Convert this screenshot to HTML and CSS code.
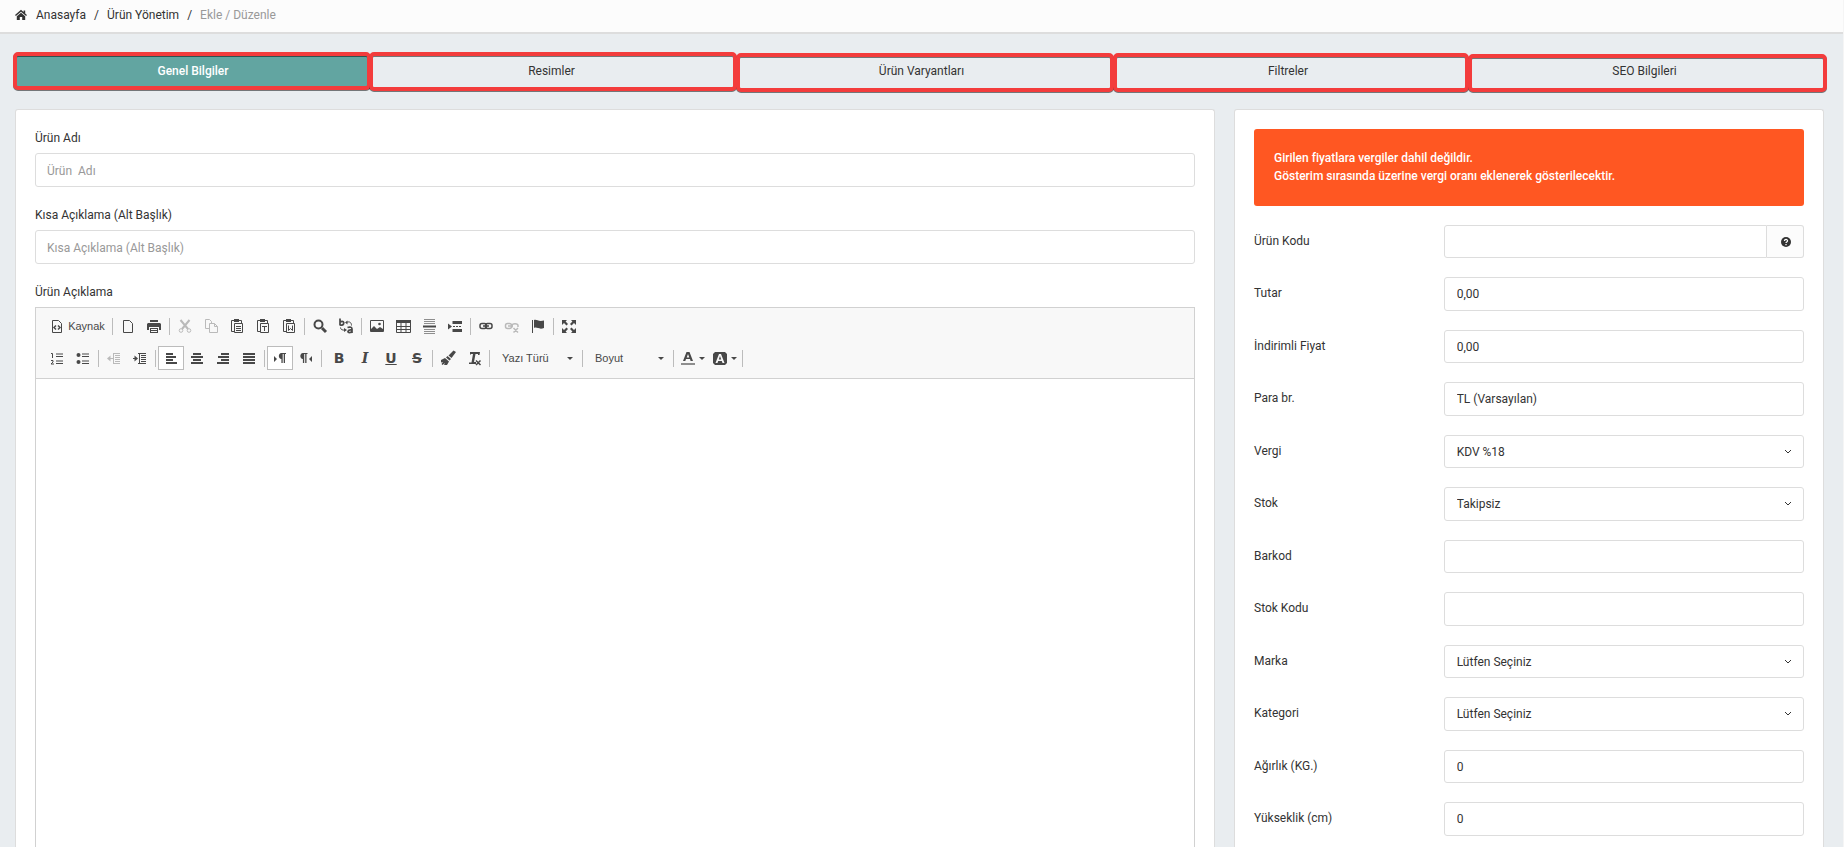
FILE: index.html
```html
<!DOCTYPE html>
<html lang="tr">
<head>
<meta charset="utf-8">
<title>Ürün Yönetim - Ekle / Düzenle</title>
<link rel="stylesheet" href="styles.css">
</head>
<body>
<div class="app">
  <header class="topbar">
    <nav class="breadcrumb" aria-label="Konum">
      <svg class="home" viewBox="0 0 12 12"><path d="M6 .8 0 6l.9 1L6 2.7 11.100 7l.9-1-1.800-1.600V1.500H8.600v1.400z"/><path d="M6 3.700 1.800 7.200V11h3V8h2.400v3h3V7.200z"/></svg>
      <a href="#">Anasayfa</a><span class="slash">/</span><a href="#">Ürün Yönetim</a><span class="slash">/</span><span class="current">Ekle / Düzenle</span>
    </nav>
  </header>

  <main class="content">
    <nav class="tabs" aria-label="Ürün sekmeleri">
      <button class="tab tab-active" type="button">Genel Bilgiler<span class="frame frame-general"></span></button>
      <button class="tab" type="button">Resimler<span class="frame frame-images"></span></button>
      <button class="tab" type="button">Ürün Varyantları<span class="frame frame-variants"></span></button>
      <button class="tab" type="button">Filtreler<span class="frame frame-filters"></span></button>
      <button class="tab" type="button">SEO Bilgileri<span class="frame frame-seo"></span></button>
    </nav>

    <div class="columns">
      <section class="card main-card">
        <div class="group">
          <label for="name">Ürün Adı</label>
          <input class="field" id="name" type="text" placeholder="Ürün&nbsp; Adı">
        </div>
        <div class="group">
          <label for="short">Kısa Açıklama (Alt Başlık)</label>
          <input class="field" id="short" type="text" placeholder="Kısa Açıklama (Alt Başlık)">
        </div>
        <label for="description">Ürün Açıklama</label>
        <div class="editor">
          <div class="toolbar">
            <div class="toolrow">
              <button class="tool wide" type="button"><svg viewBox="0 0 16 16"><path class="l" d="M3.500 2.500h6l3 3v9h-9z"/><path class="l" d="M7 7.500 5 9.500l2 2M9 7.500l2 2-2 2" stroke-width="1.500"/></svg>Kaynak</button>
              <i class="sep"></i>
              <button class="tool" type="button" aria-label="Yeni Sayfa"><svg viewBox="0 0 16 16"><path class="l" d="M3.500 2.500h6l3 3v9h-9z"/></svg></button>
              <button class="tool" type="button" aria-label="Yazdır"><svg viewBox="0 0 16 16"><path d="M4 2h8v2H4zM2 5h12l1 1v6h-2V9H3v3H1V6z"/><path fill-rule="evenodd" d="M4 10h8v5H4zm1 1v1h6v-1zm0 2v1h6v-1z"/></svg></button>
              <i class="sep"></i>
              <button class="tool off" type="button" aria-label="Kes" disabled><svg viewBox="0 0 16 16"><path class="l" stroke-width="2" d="M3.500 2 11 11M12.500 2 5 11"/><circle class="l" cx="4" cy="12.500" r="1.800"/><circle class="l" cx="12" cy="12.500" r="1.800"/></svg></button>
              <button class="tool off" type="button" aria-label="Kopyala" disabled><svg viewBox="0 0 16 16"><path class="l" d="M6 10.500H2.500v-9h4l2 2v2M6.500 5.500h5l3 3v6h-8zM11.500 5.500v3h3"/></svg></button>
              <button class="tool" type="button" aria-label="Yapıştır"><svg viewBox="0 0 16 16"><path class="l" d="M5 13.500H2.500v-11h10V5M5.500 5.500h8v9h-8z"/><path d="M5 1h5v3H5z"/><path class="l" d="M7 8.500h5M7 10.500h5M7 12.500h5"/></svg></button>
              <button class="tool" type="button" aria-label="Düz metin yapıştır"><svg viewBox="0 0 16 16"><path class="l" d="M5 13.500H2.500v-11h10V5M5.500 5.500h8v9h-8z"/><path d="M5 1h5v3H5z"/><path class="l" d="M7 8.500h5M9.500 8.500V13"/></svg></button>
              <button class="tool" type="button" aria-label="Word'den yapıştır"><svg viewBox="0 0 16 16"><path class="l" d="M5 13.500H2.500v-11h10V5M5.500 5.500h8v9h-8z"/><path d="M5 1h5v3H5z"/><path class="l" d="M7.500 7.500v5l2-2 2 2v-5"/></svg></button>
              <i class="sep"></i>
              <button class="tool" type="button" aria-label="Bul"><svg viewBox="0 0 16 16"><circle class="l" cx="6.500" cy="6.500" r="4" stroke-width="2"/><path class="l" stroke-width="3" d="m10 10 4 4"/></svg></button>
              <button class="tool" type="button" aria-label="Değiştir"><svg viewBox="0 0 16 16"><path class="l" stroke-width="1.700" d="M2 .5v7M2 4c3-1.500 4.500 0 3.500 2S3 7 2 7M9.500 9.500c3-1 4.500 0 4.500 1.500V15M14 12c-5-.5-5 3-2 2.500 1 0 2-1 2-2"/><path class="l" d="M8.500 4.500c3-1.500 5 0 5 3M2.500 9.500c0 2 2 3 4.500 2.500"/><path d="M9.500 2.500v4L7 4.500zM6 10v4L9 12z"/></svg></button>
              <i class="sep"></i>
              <button class="tool" type="button" aria-label="Resim"><svg viewBox="0 0 16 16"><path class="l" d="M1.500 2.500h13v11h-13z"/><path d="M2 13v-2l3-3 3 3 3-2 3 2v2z"/><circle cx="10.500" cy="6" r="1.300"/></svg></button>
              <button class="tool" type="button" aria-label="Tablo"><svg viewBox="0 0 16 16"><path d="M1 2h15v3H1z"/><path class="l" d="M1.500 2.500h14v12h-14zM1 8.500h15M1 11.500h15M6 5v9M11 5v9"/></svg></button>
              <button class="tool" type="button" aria-label="Yatay çizgi"><svg viewBox="0 0 16 16"><path class="l" opacity=".6" d="M3 1.500h11M3 3.500h11M3 5.500h11M3 11.500h11M3 13.500h11M3 15.500h11"/><path d="M2 7.500h13v2H2z"/></svg></button>
              <button class="tool" type="button" aria-label="Sayfa sonu"><svg viewBox="0 0 16 16"><path d="M1 5.500v6l4-3zM5.500 3H15v3H5.500zM5.500 11H15v3H5.500z"/><path class="l" stroke-dasharray="2 1" d="M6 8.500h9"/></svg></button>
              <i class="sep"></i>
              <button class="tool" type="button" aria-label="Bağlantı"><svg viewBox="0 0 16 16"><rect class="l" x="2" y="5.500" width="6.500" height="5" rx="2" stroke-width="1.500"/><rect class="l" x="7.500" y="5.500" width="6.500" height="5" rx="2" stroke-width="1.500"/><path class="l" stroke-width="1.500" d="M5 8h6"/></svg></button>
              <button class="tool off" type="button" aria-label="Bağlantıyı kaldır" disabled><svg viewBox="0 0 16 16"><rect class="l" x="1.500" y="5.500" width="6" height="5" rx="2" stroke-width="1.500"/><path class="l" stroke-width="1.500" d="M4 8h5M8 9.500V7.500c0-2.500 6-2.500 6 0V9M9.500 10l4.500 4.500m0-4.500-4.500 4.500"/></svg></button>
              <button class="tool" type="button" aria-label="Çapa"><svg viewBox="0 0 16 16"><path d="M2 2h1v13H2zM4 2c3-1 4 2 10 .5V10c-5 2-7-1.500-10 0z"/></svg></button>
              <i class="sep"></i>
              <button class="tool" type="button" aria-label="Tam ekran"><svg viewBox="0 0 16 16"><path d="M1 2h5L4.600 3.600 7 6 5.500 7.500 3 5 1 7zM15 2v5l-2-2-2.500 2.500L9 6l2.400-2.400L10 2zM1 15v-5l2 2 2.500-2.500L7 11l-2.400 2.400L6 15zM15 15h-5l1.400-1.600L9 11l1.500-1.500L13 12l2-2z"/></svg></button>
            </div>
            <div class="toolrow">
              <button class="tool" type="button" aria-label="Numaralı liste"><svg viewBox="0 0 16 16"><path class="l" d="M2 3.500h1.500V8M2 10.500h2V12L2 14h3"/><path class="l" d="M7 4h7M7 6.500h7M7 11h7M7 13.500h7"/></svg></button>
              <button class="tool" type="button" aria-label="Maddeli liste"><svg viewBox="0 0 16 16"><circle cx="3.500" cy="5" r="2"/><circle cx="3.500" cy="12" r="2"/><path class="l" d="M7 4h7M7 6.500h7M7 11h7M7 13.500h7"/></svg></button>
              <i class="sep"></i>
              <button class="tool off" type="button" aria-label="Girintiyi azalt" disabled><svg viewBox="0 0 16 16"><path d="M1 8.500 4.500 5.500v6z"/><path class="l" d="M4 8.500h4M7 3.500h7M9 5.500h5M9 7.500h5M9 9.500h5M9 11.500h5M7 13.500h7M7.500 3v11"/></svg></button>
              <button class="tool" type="button" aria-label="Girintiyi artır"><svg viewBox="0 0 16 16"><path d="M6 8.500 2.500 5.500v6z"/><path class="l" d="M1 8.500h4M6 3.500h8M9 5.500h5M9 7.500h5M9 9.500h5M9 11.500h5M6 13.500h8M7.500 3v11"/></svg></button>
              <i class="sep"></i>
              <button class="tool on" type="button" aria-label="Sola hizala"><svg viewBox="0 0 16 16"><path d="M3 3h7v2H3zM3 6h10v2H3zM3 9h7v2H3zM3 12h11v2H3z"/></svg></button>
              <button class="tool" type="button" aria-label="Ortala"><svg viewBox="0 0 16 16"><path d="M4 3h8v2H4zM2 6h12v2H2zM4 9h8v2H4zM2 12h12v2H2z"/></svg></button>
              <button class="tool" type="button" aria-label="Sağa hizala"><svg viewBox="0 0 16 16"><path d="M6 3h8v2H6zM3 6h11v2H3zM6 9h8v2H6zM2 12h12v2H2z"/></svg></button>
              <button class="tool" type="button" aria-label="İki yana yasla"><svg viewBox="0 0 16 16"><path d="M2 3h12v2H2zM2 6h12v2H2zM2 9h12v2H2zM2 12h12v2H2z"/></svg></button>
              <i class="sep"></i>
              <button class="tool on" type="button" aria-label="Soldan sağa"><svg viewBox="0 0 16 16"><path d="M2 6v6l3-3zM14 3v1h-1v9h-1.300V4h-1v9H9.400V9C6 9 6 3 9.400 3z"/></svg></button>
              <button class="tool" type="button" aria-label="Sağdan sola"><svg viewBox="0 0 16 16"><path d="M14 6v6l-3-3zM9.500 3v1h-1v9H7.200V4h-1v9H4.900V9C1.500 9 1.500 3 4.900 3z"/></svg></button>
              <i class="sep"></i>
              <div class="styles">
                <button class="tool glyph" type="button" aria-label="Kalın"><b>B</b></button>
                <button class="tool glyph serif" type="button" aria-label="İtalik"><b><em>I</em></b></button>
                <button class="tool glyph" type="button" aria-label="Altı çizili"><b><u>U</u></b></button>
                <button class="tool glyph" type="button" aria-label="Üstü çizili"><b><s>S</s></b></button>
              </div>
              <i class="sep"></i>
              <button class="tool" type="button" aria-label="Biçim kopyala"><svg viewBox="0 0 16 16"><path d="M13.500.5 16 2l-4.500 6L8.500 5.500zM7.500 6l3.500 3-1.500 1.500L6 7.500zM5 8l4 3.500L7 15H4l1-2-2.500 2-1-1L3 12l-2 .5V10z"/></svg></button>
              <button class="tool" type="button" aria-label="Biçimi temizle"><svg viewBox="0 0 16 16"><path d="M4 2h10l-.5 3H12V4H9.500L8 12h2v2H3v-1.500h2.500L7 4H5l-1 1z"/><path class="l" stroke-width="1.500" d="m10 10.500 4.500 4.500m0-4.500L10 15"/></svg></button>
              <i class="sep"></i>
              <button class="tool combo font" type="button">Yazı Türü<span class="arrow"></span></button>
              <i class="sep"></i>
              <button class="tool combo size" type="button">Boyut<span class="arrow"></span></button>
              <i class="sep"></i>
              <button class="tool color" type="button" aria-label="Yazı rengi"><svg viewBox="0 0 16 16"><path fill-rule="evenodd" d="M6.500 2h3L13 11h-2.400L10 9H6l-.7 2H3zM8 4 6.700 7.400h2.600z"/><path opacity=".6" d="M1 13h14v2H1z"/></svg><span class="arrow"></span></button>
              <button class="tool color" type="button" aria-label="Arka plan rengi"><svg viewBox="0 0 16 16"><path fill-rule="evenodd" d="M3 2h10l2 2v9l-2 2H3l-2-2V4zM7 4 3.500 13h2L6.200 11h3.600l.7 2h2L9 4zM8 6l1.200 3.500H6.800z"/></svg><span class="arrow"></span></button>
              <i class="sep"></i>
            </div>
          </div>
          <textarea class="editor-body" id="description"></textarea>
        </div>
      </section>

      <aside class="card side-card">
        <div class="alert">Girilen fiyatlara vergiler dahil değildir.<br>Gösterim sırasında üzerine vergi oranı eklenerek gösterilecektir.</div>
        <div class="row"><label for="code">Ürün Kodu</label><div class="addon-group"><input class="field" id="code" type="text"><button class="addon" type="button" aria-label="Yardım"><svg viewBox="0 0 10 10"><circle cx="5" cy="5" r="5"/><path class="q" d="M3.500 4c0-2.200 3.200-2 3 0C6.400 5 5 4.900 5 6M5 7v1.200"/></svg></button></div></div>
        <div class="row"><label for="price">Tutar</label><input class="field" id="price" type="text" value="0,00"></div>
        <div class="row"><label for="sale">İndirimli Fiyat</label><input class="field" id="sale" type="text" value="0,00"></div>
        <div class="row"><label for="currency">Para br.</label><input class="field" id="currency" type="text" value="TL (Varsayılan)"></div>
        <div class="row"><label for="tax">Vergi</label><div class="select"><select class="field" id="tax"><option>KDV %18</option></select><svg viewBox="0 0 8 6"><path d="m1 1 3 3 3-3"/></svg></div></div>
        <div class="row"><label for="stock">Stok</label><div class="select"><select class="field" id="stock"><option>Takipsiz</option></select><svg viewBox="0 0 8 6"><path d="m1 1 3 3 3-3"/></svg></div></div>
        <div class="row"><label for="barcode">Barkod</label><input class="field" id="barcode" type="text"></div>
        <div class="row"><label for="stockcode">Stok Kodu</label><input class="field" id="stockcode" type="text"></div>
        <div class="row"><label for="brand">Marka</label><div class="select"><select class="field" id="brand"><option>Lütfen Seçiniz</option></select><svg viewBox="0 0 8 6"><path d="m1 1 3 3 3-3"/></svg></div></div>
        <div class="row"><label for="category">Kategori</label><div class="select"><select class="field" id="category"><option>Lütfen Seçiniz</option></select><svg viewBox="0 0 8 6"><path d="m1 1 3 3 3-3"/></svg></div></div>
        <div class="row"><label for="weight">Ağırlık (KG.)</label><input class="field" id="weight" type="text" value="0"></div>
        <div class="row"><label for="height">Yükseklik (cm)</label><input class="field" id="height" type="text" value="0"></div>
      </aside>
    </div>
  </main>
</div>
</body>
</html>
```
FILE: styles.css
```css
* { box-sizing: border-box; }

body {
  margin: 0;
  background: #e9edf0;
  color: #333;
  font: 12px/18px Roboto, sans-serif;
}

button, input, select, textarea { font: inherit; color: inherit; margin: 0; }
a { color: inherit; text-decoration: none; }
svg { display: block; flex: none; }

.app {
  display: flex;
  flex-direction: column;
  height: 100vh;
  overflow: hidden;
  border-right: 1px solid #f5f5f5;
}

.topbar {
  background: #fcfcfc;
  border-bottom: 2px solid #ddd;
  padding: 6px 15px 8px;
}
.breadcrumb { display: flex; align-items: center; }
.home { width: 12px; height: 12px; margin-right: 9px; fill: #333; }
.slash { margin: 0 8px; }
.current { color: #999; }

.content {
  flex: 1;
  min-height: 0;
  display: flex;
  flex-direction: column;
  gap: 20px;
  padding: 20px 19px 0 15px;
}

.tabs {
  display: grid;
  grid-template-columns: 356fr 361fr 379fr 354fr 359fr;
}
.tab {
  position: relative;
  height: 35px;
  padding: 0 0 2px;
  border: 0;
  background: none;
}
.tab-active { background: #62a5a1; color: #fff; font-weight: 500; }

/* Highlight frames drawn over the tabs */
.frame {
  position: absolute;
  border: 4px solid #f33c3c;
  border-radius: 5px;
  filter: drop-shadow(0 1px 0 rgba(0, 0, 0, .5));
}
.frame-general { inset: -2px 0 -1px -2px; }
.frame-images { inset: -2px -5px -2px -2px; }
.frame-variants { inset: -1px -3px -3px 4px; }
.frame-filters { inset: -1px -4px -3px 2px; }
.frame-seo { inset: 0 -3px -3px 3px; }

.columns {
  flex: 1;
  min-height: 0;
  display: grid;
  grid-template-columns: 1200fr 590fr;
  gap: 19px;
}
.card {
  background: #fff;
  border: 1px solid #ddd;
  border-bottom: 0;
  border-radius: 3px 3px 0 0;
  padding: 19px 19px 0;
}
.main-card { display: flex; flex-direction: column; }
.main-card label { display: block; margin-bottom: 6px; }
.group { margin-bottom: 19px; }

.field {
  display: block;
  width: 100%;
  height: 34px;
  padding: 0 12px;
  border: 1px solid #ddd;
  border-radius: 3px;
  background: #fff;
  outline: 0;
}
.main-card .field { padding: 1px 11px 0; }
.field::placeholder { color: #999; opacity: 1; }

.editor {
  flex: 1;
  min-height: 0;
  display: flex;
  flex-direction: column;
  border: 1px solid #d1d1d1;
  border-bottom: 0;
}
.toolbar {
  display: flex;
  flex-direction: column;
  gap: 8px;
  padding: 6px 8px 8px;
  background: #f8f8f8;
  border-bottom: 1px solid #d1d1d1;
  color: #484848;
  font-family: "Liberation Sans", Arial, sans-serif;
  font-size: 11px;
}
.toolrow { display: flex; align-items: center; height: 24px; }
.tool {
  display: flex;
  align-items: center;
  justify-content: center;
  width: 26px;
  height: 24px;
  padding: 0;
  border: 1px solid transparent;
  background: none;
}
.tool svg { width: 16px; height: 16px; fill: #484848; }
.tool .l { fill: none; stroke: #484848; }
.tool.on { background: #fff; border-color: #bcbcbc; }
.tool.off { opacity: .35; }
.tool.wide { width: 66px; gap: 3px; }
.styles { display: flex; margin-left: 2px; }
.glyph { font: bold 14px "DejaVu Sans", sans-serif; }
.glyph.serif { font-family: "DejaVu Serif", serif; }
.sep { width: 1px; height: 17px; margin: 0 2px; background: #bcbcbc; }
.combo { justify-content: space-between; padding: 0 6px 0 9px; }
.combo.font { width: 88px; }
.combo.size { width: 86px; }
.color { width: 32px; gap: 3px; }
.arrow {
  border: 3px solid transparent;
  border-top-color: #484848;
  border-bottom: 0;
}
.editor-body {
  flex: 1;
  width: 100%;
  border: 0;
  padding: 20px;
  resize: none;
  outline: 0;
  background: #fff;
}

.alert {
  margin-bottom: 19px;
  padding: 20px 20px 21px;
  border-radius: 3px;
  background: #ff5722;
  color: #fff;
  font-weight: 500;
}
.row {
  display: grid;
  grid-template-columns: 190fr 361fr;
  margin-bottom: 19px;
}
.row label { padding-top: 7px; }
.row .field { height: 34px; }
.row:nth-child(even) .field, .row:nth-child(even) { height: 33px; }
.addon-group { display: flex; }
.addon-group .field { flex: 1; width: auto; border-radius: 3px 0 0 3px; }
.addon {
  display: flex;
  align-items: center;
  justify-content: center;
  width: 37px;
  padding: 0 4px 0 6px;
  border: 1px solid #ddd;
  border-left: 0;
  border-radius: 0 3px 3px 0;
  background: #fcfcfc;
}
.addon svg { width: 10px; height: 10px; fill: #333; }
.q { fill: none; stroke: #fff; stroke-width: 1.3; }
.select { position: relative; }
.select .field { appearance: none; }
.select svg {
  position: absolute;
  right: 12px;
  top: 14px;
  width: 8px;
  height: 6px;
  fill: none;
  stroke: #333;
  pointer-events: none;
}
```
